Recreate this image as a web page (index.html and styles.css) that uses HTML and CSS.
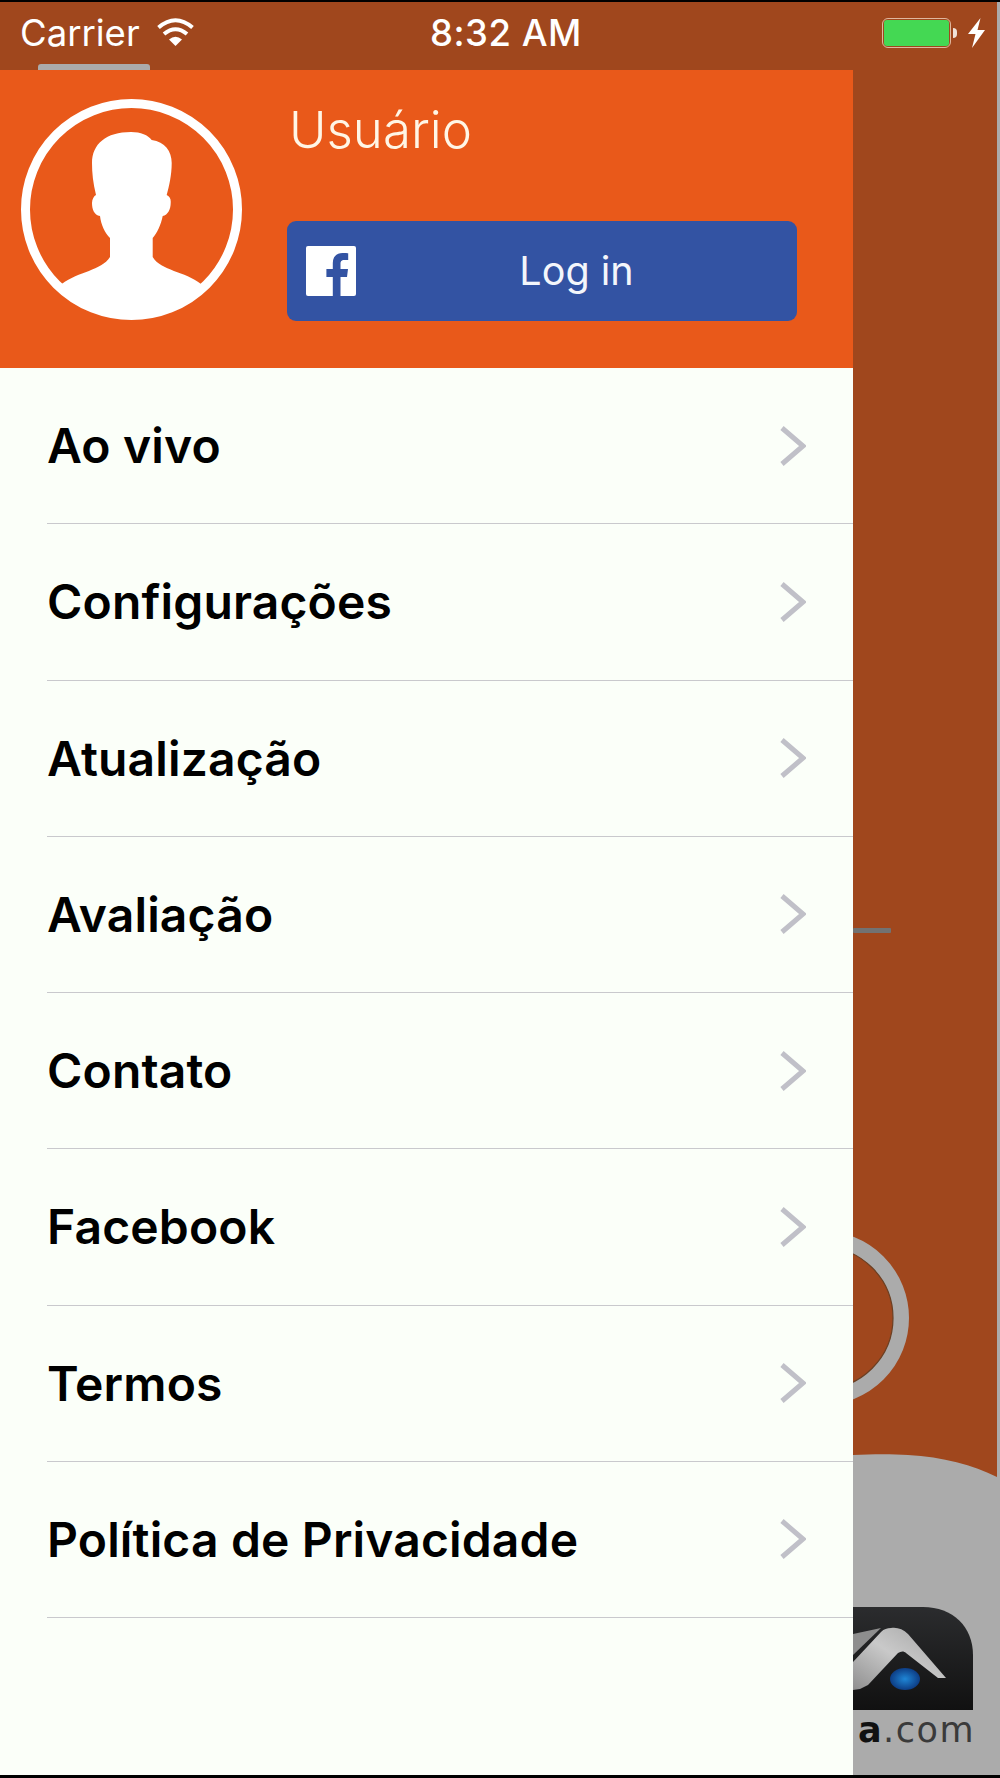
FILE: index.html
```html
<!DOCTYPE html>
<html>
<head>
<meta charset="utf-8">
<link rel="stylesheet" href="styles.css">
</head>
<body>

<div class="screen">
    <!-- what shows behind the open drawer -->
    <div class="behind">
        <div class="dash"></div>
        <svg class="ring" width="180" height="180" viewBox="0 0 180 180">
            <circle cx="90" cy="90" r="79" fill="none" stroke="#ababab" stroke-width="16"/>
            <circle cx="90" cy="90" r="71" fill="none" stroke="#6b3f22" stroke-width="1.2"/>
        </svg>
        <div class="wave">
            <svg class="wave-top" width="144" height="30" viewBox="0 0 144 30">
                <path d="M0 8C20 7 40 7 55 8C90 10 120 18 144 30H0Z" fill="#ababab"/>
            </svg>
        </div>
        <svg class="logo" width="120" height="103" viewBox="0 0 120 103">
            <defs>
                <linearGradient id="logoDark" x1="0" y1="0" x2="0" y2="1">
                    <stop offset="0" stop-color="#2b2c2e"/>
                    <stop offset="1" stop-color="#111"/>
                </linearGradient>
                <linearGradient id="logoSilver" x1="0" y1="1" x2="1" y2="0">
                    <stop offset="0" stop-color="#8f8f8f"/>
                    <stop offset="0.5" stop-color="#c9c9c9"/>
                    <stop offset="1" stop-color="#a2a2a2"/>
                </linearGradient>
                <radialGradient id="logoBlue">
                    <stop offset="0" stop-color="#1f86d6"/>
                    <stop offset="1" stop-color="#0d3d85"/>
                </radialGradient>
            </defs>
            <path d="M0 0H70C100 0 120 20 120 48V103H0Z" fill="url(#logoDark)"/>
            <path d="M0 27L28 21L0 48Z" fill="#8e8e8e"/>
            <path d="M0 83L7 82L15 78L45 46C48 44 51 44 53 46L85 71H93L55 27C50 22 44 20 38 21C34 21 31 22 28 25L0 55Z" fill="url(#logoSilver)"/>
            <ellipse cx="52" cy="72" rx="15" ry="11" fill="url(#logoBlue)"/>
        </svg>
        <div class="logo-text"><b>a</b>.com</div>
    </div>

    <div class="status-bar">
        <div class="status-left">
            <span>Carrier</span>
            <svg width="37" height="28" viewBox="0 0 37 28">
                <path d="M1.5 9.5Q18.5 -5 35.5 9.5" fill="none" stroke="#fff" stroke-width="4"/>
                <path d="M7 16Q18.5 6.5 30 16" fill="none" stroke="#fff" stroke-width="4"/>
                <path d="M12 21.5Q18.5 16 25 21.5L18.5 28Z" fill="#fff"/>
            </svg>
        </div>
        <div class="status-time">8:32 AM</div>
        <div class="status-right">
            <div class="battery"><div class="battery-fill"></div></div>
            <div class="battery-cap"></div>
            <svg width="17" height="30" viewBox="0 0 17 30">
                <path d="M12.5 0L0 16H7.5L4 30L17 12H9.5Z" fill="#fff"/>
            </svg>
        </div>
        <div class="tab-hint"></div>
    </div>

    <div class="drawer">
        <div class="profile">
            <svg class="avatar" width="221" height="221" viewBox="0 0 221 221">
                <circle cx="110.5" cy="110.5" r="106" fill="none" stroke="#fff" stroke-width="9"/>
                <path d="M40.7 185C58 172 80 172 89 158V139C84 134 80 126 79 117C73 116 71 110 71 104C71 100 73 97 75 96C72 84 71 74 71 64C71 45 85 33 110 33C120 33 127 36 130.7 41C144 43 150.7 52 150.7 64C150.7 76 148 88 145.7 96C149 98 150 100 149.7 104C149.7 110 147 116 141.7 117C140 126 136 134 131.7 139V158C140 172 164 172 180 185L185 189A108 108 0 0 1 36 189Z" fill="#fff"/>
            </svg>
            <div class="profile-info">
                <div class="user-name">Usuário</div>
                <div class="fb-button">
                    <svg class="fb-icon" width="50" height="50" viewBox="0 0 50 50">
                        <rect width="50" height="50" rx="2" fill="#fff"/>
                        <path d="M34.5 50V31H41L42 23H34.5V18C34.5 15.6 35.2 14 38.4 14H42.2V7.2C41.5 7.1 39.2 7 36.5 7C30.7 7 26.8 10.5 26.8 17V23H20.4V31H26.8V50Z" fill="#3353a3"/>
                    </svg>
                    <span class="fb-label">Log in</span>
                </div>
            </div>
        </div>

        <ul class="menu">
            <li class="menu-item"><span>Ao vivo</span><svg class="chevron" width="26" height="40" viewBox="0 0 26 40"><path d="M2 2L23 20L2 38" fill="none" stroke="#c0c0c8" stroke-width="5"/></svg></li>
            <li class="menu-item"><span>Configurações</span><svg class="chevron" width="26" height="40" viewBox="0 0 26 40"><path d="M2 2L23 20L2 38" fill="none" stroke="#c0c0c8" stroke-width="5"/></svg></li>
            <li class="menu-item"><span>Atualização</span><svg class="chevron" width="26" height="40" viewBox="0 0 26 40"><path d="M2 2L23 20L2 38" fill="none" stroke="#c0c0c8" stroke-width="5"/></svg></li>
            <li class="menu-item"><span>Avaliação</span><svg class="chevron" width="26" height="40" viewBox="0 0 26 40"><path d="M2 2L23 20L2 38" fill="none" stroke="#c0c0c8" stroke-width="5"/></svg></li>
            <li class="menu-item"><span>Contato</span><svg class="chevron" width="26" height="40" viewBox="0 0 26 40"><path d="M2 2L23 20L2 38" fill="none" stroke="#c0c0c8" stroke-width="5"/></svg></li>
            <li class="menu-item"><span>Facebook</span><svg class="chevron" width="26" height="40" viewBox="0 0 26 40"><path d="M2 2L23 20L2 38" fill="none" stroke="#c0c0c8" stroke-width="5"/></svg></li>
            <li class="menu-item"><span>Termos</span><svg class="chevron" width="26" height="40" viewBox="0 0 26 40"><path d="M2 2L23 20L2 38" fill="none" stroke="#c0c0c8" stroke-width="5"/></svg></li>
            <li class="menu-item"><span>Política de Privacidade</span><svg class="chevron" width="26" height="40" viewBox="0 0 26 40"><path d="M2 2L23 20L2 38" fill="none" stroke="#c0c0c8" stroke-width="5"/></svg></li>
        </ul>
    </div>
</div>

</body>
</html>
```

FILE: styles.css
```css
html, body {
    margin: 0;
    padding: 0;
    background: #000;
}

body {
    width: 1000px;
    height: 1778px;
    overflow: hidden;
    font-family: Inter, "Liberation Sans", sans-serif;
}

.screen {
    position: relative;
    width: 1000px;
    height: 1773px;
    margin-top: 2px;
    background: #a0471d;
    overflow: hidden;
    display: flex;
    flex-direction: column;
}

.screen::after {
    content: "";
    position: absolute;
    top: 0;
    right: 0;
    width: 3px;
    height: 100%;
    background: #ababab;
}

/* background app */
.behind {
    position: absolute;
    inset: 0;
}

.dash {
    position: absolute;
    left: 853px;
    top: 926px;
    width: 38px;
    height: 5px;
    border-radius: 1px;
    background: #727272;
}

.ring {
    position: absolute;
    left: 732px;
    top: 1226px;
}

.wave {
    position: absolute;
    left: 853px;
    top: 1475px;
    right: 0;
    bottom: 0;
    background: #ababab;
}

.wave-top {
    position: absolute;
    left: 0;
    top: -30px;
    display: block;
}

.logo {
    position: absolute;
    left: 853px;
    top: 1605px;
}

.logo-text {
    position: absolute;
    left: 775px;
    top: 1710px;
    width: 200px;
    text-align: right;
    font-family: "DejaVu Sans", sans-serif;
    font-size: 35px;
    line-height: 36px;
    letter-spacing: 1.5px;
    color: #3a3a3a;
    white-space: nowrap;
}

.logo-text b {
    color: #111;
}

/* status bar */
.status-bar {
    position: relative;
    flex: none;
    height: 68px;
    color: #fff;
    display: flex;
    align-items: flex-start;
    font-size: 36.5px;
    line-height: 62px;
}

.status-left {
    width: 409px;
    padding-left: 20px;
    display: flex;
    align-items: center;
    gap: 17px;
    box-sizing: border-box;
}

.status-left svg {
    margin-top: -2px;
}

.status-time {
    width: 430px;
    font-weight: 500;
    letter-spacing: 0.5px;
    padding-left: 21px;
    box-sizing: border-box;
}

.status-right {
    display: flex;
    align-items: center;
    height: 62px;
    margin-left: 43px;
}

.battery {
    width: 69px;
    height: 30px;
    box-sizing: border-box;
    border: 1.5px solid #e0b79e;
    border-radius: 6px;
    padding: 1px;
}

.battery-fill {
    height: 100%;
    background: #44d853;
    border-radius: 3px;
}

.battery-cap {
    width: 4px;
    height: 10px;
    margin-left: 2px;
    margin-right: 11px;
    background: #f0e2d8;
    border-radius: 0 4px 4px 0;
}

.tab-hint {
    position: absolute;
    left: 38px;
    bottom: 0;
    width: 112px;
    height: 6px;
    border-radius: 3px 3px 0 0;
    background: #ababab;
}

/* drawer */
.drawer {
    position: relative;
    width: 853px;
    flex: 1;
    background: #fbfff9;
}

.profile {
    height: 298px;
    box-sizing: border-box;
    padding: 29px 56px 0 21px;
    background: #e9591a;
    display: flex;
    gap: 45px;
}

.avatar {
    flex: none;
    display: block;
}

.profile-info {
    flex: 1;
    display: flex;
    flex-direction: column;
}

.user-name {
    height: 122px;
    padding-left: 2px;
    font-size: 51px;
    font-weight: 300;
    line-height: 62px;
    color: #fff6e6;
}

.fb-button {
    height: 100px;
    padding-left: 19px;
    border-radius: 9px;
    background: #3353a3;
    display: flex;
    align-items: center;
}

.fb-icon {
    flex: none;
}

.fb-label {
    flex: 1;
    text-align: center;
    font-size: 39.5px;
    color: #f4f6fb;
}

.menu {
    list-style: none;
    margin: 0;
    padding: 0;
}

.menu-item {
    height: 156.25px;
    box-sizing: border-box;
    margin-left: 47px;
    padding-right: 47px;
    border-bottom: 1.5px solid #c9c9cd;
    display: flex;
    align-items: center;
    justify-content: space-between;
    font-size: 48px;
    font-weight: 600;
    letter-spacing: 0.15px;
    color: #000;
}
```
